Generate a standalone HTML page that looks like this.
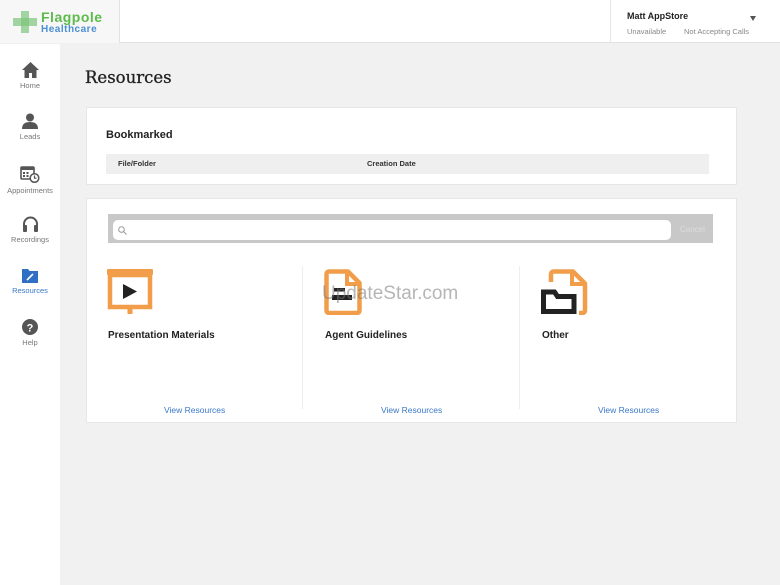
<!DOCTYPE html>
<html><head><style>
*{margin:0;padding:0;box-sizing:border-box}
body{width:780px;height:585px;background:#f1f1f1;font-family:"Liberation Sans",sans-serif;position:relative;overflow:hidden}
.abs{position:absolute}
#hdr{left:0;top:0;width:780px;height:43px;background:#fff;border-bottom:1px solid #e2e2e2}
#logo{left:0;top:0;width:120px;height:43px;background:#f7f7f7;border-right:1px solid #e2e2e2}
#prof{left:610px;top:0;width:170px;height:43px;border-left:1px solid #e6e6e6}
#side{left:0;top:44px;width:60px;height:541px;background:#fff}
.nav{position:absolute;left:0;width:60px;text-align:center;font-size:7.5px;color:#777}
.nav svg{display:block;margin:0 auto 3px}
.card{position:absolute;background:#fff;border:1px solid #e6e6e6}
.t{font-weight:bold;font-size:10px;color:#222}
.lnk{position:absolute;font-size:8.5px;color:#3a78c9}
</style></head><body>
<div id="hdr" class="abs"></div>
<div id="logo" class="abs">
<svg class="abs" style="left:13px;top:11px" width="24" height="22" viewBox="0 0 24 22"><g fill="#7cc47a"><rect x="8" y="0" width="8" height="22" opacity=".7"/><rect x="0" y="7" width="24" height="8" opacity=".7"/></g></svg>
<div class="abs" style="left:41px;top:9px;font-size:14px;font-weight:bold;color:#5cbb4a;letter-spacing:.5px">Flagpole</div>
<div class="abs" style="left:41px;top:24px;font-size:10px;font-weight:bold;color:#4a8fd4;letter-spacing:.5px">Healthcare</div>
</div>
<div id="prof" class="abs">
<div class="abs" style="left:16px;top:11px;font-size:9px;font-weight:bold;color:#222">Matt AppStore</div>
<div class="abs" style="left:16px;top:27px;font-size:7.5px;color:#888">Unavailable</div>
<div class="abs" style="left:73px;top:27px;font-size:7.5px;color:#888">Not Accepting Calls</div>
<div class="abs" style="left:139px;top:16px;width:0;height:0;border-left:3.5px solid transparent;border-right:3.5px solid transparent;border-top:5px solid #555"></div>
</div>
<div id="side" class="abs">
<div class="nav" style="top:18px"><svg width="17" height="16" viewBox="0 0 17 16"><path d="M8.5 0L0 8h2.5v8h4.5v-5h3v5h4.5V8H17z" fill="#555"/></svg>Home</div>
<div class="nav" style="top:69px"><svg width="16" height="16" viewBox="0 0 16 16"><circle cx="8" cy="4.5" r="4" fill="#555"/><path d="M0 16c0-5 3-7 8-7s8 2 8 7z" fill="#555"/></svg>Leads</div>
<div class="nav" style="top:121px"><svg width="20" height="18" viewBox="0 0 20 18"><rect x="1" y="2" width="13" height="12" rx="1" fill="none" stroke="#555" stroke-width="1.6"/><rect x="1" y="2" width="13" height="3" fill="#555"/><g fill="#555"><rect x="3" y="7" width="2" height="2"/><rect x="6.5" y="7" width="2" height="2"/><rect x="3" y="10" width="2" height="2"/><rect x="6.5" y="10" width="2" height="2"/></g><circle cx="14.5" cy="13" r="4.3" fill="#fff" stroke="#555" stroke-width="1.5"/><path d="M14.5 10.5v2.7h2" stroke="#555" fill="none" stroke-width="1.2"/></svg>Appointments</div>
<div class="nav" style="top:172px"><svg width="17" height="16" viewBox="0 0 17 16"><path d="M2 12V8a6.5 6.5 0 0113 0v4" fill="none" stroke="#555" stroke-width="2"/><rect x="1" y="9" width="4" height="7" rx="1" fill="#555"/><rect x="12" y="9" width="4" height="7" rx="1" fill="#555"/></svg>Recordings</div>
<div class="nav" style="top:224px;color:#3a78c9"><svg width="16" height="15" viewBox="0 0 16 15"><path d="M0 1h6l1.5 2H16v12H0z" fill="#2f6fc4"/><path d="M5 12l6-6" stroke="#fff" stroke-width="1.6"/></svg>Resources</div>
<div class="nav" style="top:275px"><svg width="16" height="16" viewBox="0 0 16 16"><circle cx="8" cy="8" r="8" fill="#555"/><text x="8" y="12.5" font-size="11" font-weight="bold" fill="#fff" text-anchor="middle" font-family="Liberation Sans">?</text></svg>Help</div>
</div>
<div class="abs" style="left:85px;top:68px;font-family:'DejaVu Serif',serif;font-size:16.5px;color:#222;-webkit-text-stroke:.3px #222">Resources</div>
<div class="card" style="left:86px;top:107px;width:651px;height:78px">
<div class="abs t" style="left:19px;top:21px;font-size:11px">Bookmarked</div>
<div class="abs" style="left:19px;top:46px;width:603px;height:20px;background:#efefef"></div>
<div class="abs" style="left:31px;top:51px;font-size:7.5px;font-weight:bold;color:#333">File/Folder</div>
<div class="abs" style="left:280px;top:51px;font-size:7.5px;font-weight:bold;color:#333">Creation Date</div>
</div>
<div class="card" style="left:86px;top:198px;width:651px;height:225px">
<div class="abs" style="left:21px;top:15px;width:605px;height:29px;background:#c8c8c8"></div>
<div class="abs" style="left:26px;top:21px;width:558px;height:20px;background:#fff;border-radius:5px"></div>
<svg class="abs" style="left:31px;top:27px" width="9" height="9" viewBox="0 0 9 9"><circle cx="3.5" cy="3.5" r="2.8" fill="none" stroke="#999" stroke-width="1"/><path d="M5.5 5.5L8.5 8.5" stroke="#999"/></svg>
<div class="abs" style="left:593px;top:26px;font-size:8px;color:#ddd">Cancel</div>
<div class="abs" style="left:215px;top:67px;width:1px;height:143px;background:#eee"></div>
<div class="abs" style="left:432px;top:67px;width:1px;height:143px;background:#eee"></div>
<svg class="abs" style="left:20px;top:70px" width="46" height="46" viewBox="0 0 46 46"><rect x="0" y="0" width="46" height="6" rx="1" fill="#f19d4a"/><rect x="3" y="6" width="40" height="32" fill="none" stroke="#f19d4a" stroke-width="4.5"/><rect x="20.5" y="39" width="5" height="6" fill="#f19d4a"/><path d="M16 15l14 7.5-14 7.5z" fill="#222"/></svg>
<div class="abs t" style="left:21px;top:131px">Presentation Materials</div>
<svg class="abs" style="left:237px;top:70px" width="38" height="46" viewBox="0 0 38 46"><path d="M5 2.5h19l11.5 11.5v27.5a2.5 2.5 0 01-2.5 2.5H5a2.5 2.5 0 01-2.5-2.5V5A2.5 2.5 0 015 2.5z" fill="none" stroke="#f19d4a" stroke-width="4.5" stroke-linejoin="round"/><path d="M23 2v13h13" fill="none" stroke="#f19d4a" stroke-width="4"/><rect x="10" y="19" width="11" height="3.5" fill="#222"/><rect x="8" y="26" width="20" height="5" fill="#222"/></svg>
<div class="abs t" style="left:238px;top:131px">Agent Guidelines</div>
<svg class="abs" style="left:454px;top:70px" width="48" height="46" viewBox="0 0 48 46"><path d="M10 13V5a2.5 2.5 0 012.5-2.5H32l12 12v27a2.5 2.5 0 01-2.5 2.5H38" fill="none" stroke="#f19d4a" stroke-width="4.5" stroke-linejoin="round"/><path d="M31 2v13h13" fill="none" stroke="#f19d4a" stroke-width="4"/><path d="M2.5 23h11l3 4.5H33v15H2.5z" fill="none" stroke="#222" stroke-width="5"/></svg>
<div class="abs t" style="left:455px;top:131px">Other</div>
<div class="lnk" style="left:77px;top:206px">View Resources</div>
<div class="lnk" style="left:294px;top:206px">View Resources</div>
<div class="lnk" style="left:511px;top:206px">View Resources</div>
</div>
<div class="abs" style="left:322px;top:283px;font-size:19px;color:rgba(120,120,120,.55)">UpdateStar.com</div>
</body></html>
